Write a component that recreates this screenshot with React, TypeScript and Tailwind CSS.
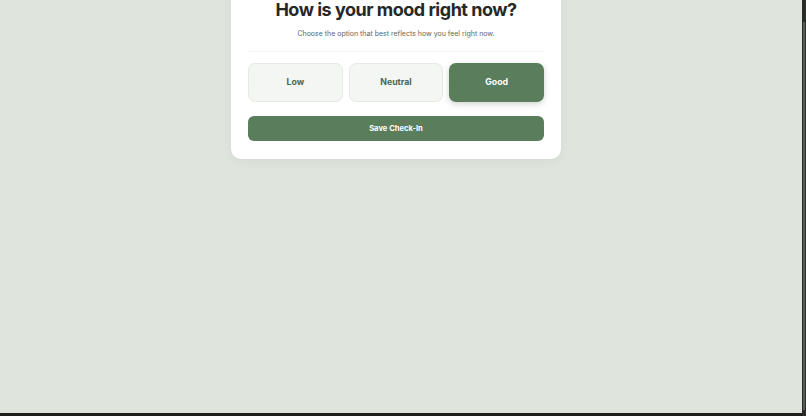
import React, { useState } from "react";

export default function App() {
  const [mood, setMood] = useState("Good");
  const options = ["Low", "Neutral", "Good"];
  return (
    <div className="flex h-[416px] w-[806px] overflow-hidden bg-[#1e1f1e]" style={{ fontFamily: "Inter, 'Noto Sans', sans-serif" }}>
      <div className="flex h-[413px] flex-1 flex-col">
        <div className="flex flex-1 justify-center bg-[#dfe5dd] pr-[10px]">
          <div className="-mt-[20px] flex h-[179px] w-[330px] flex-col rounded-[10px] bg-white px-[17px] shadow-[0_2px_8px_rgba(60,80,60,0.08)]">
            <h1 className="mt-[16px] text-center text-[18px] font-bold leading-[28px] tracking-[-0.5px] text-[#262826]">
              How is your mood right now?
            </h1>
            <p className="mt-[5px] text-center text-[7px] leading-[10px] text-[#626562]">
              Choose the option that best reflects how you feel right now.
            </p>
            <div className="mt-[12px] h-px bg-[#f4f5f3]" />
            <div className="mt-[11px] grid grid-cols-3 gap-[6px]">
              {options.map((o) => (
                <button
                  key={o}
                  onClick={() => setMood(o)}
                  className={
                    o === mood
                      ? "flex h-[39px] items-center justify-center rounded-[7px] bg-[#5a7d5c] text-[8.75px] font-bold text-white shadow-[0_2px_6px_rgba(60,90,60,0.25)]"
                      : "flex h-[39px] items-center justify-center rounded-[7px] border border-[#e6e9e5] bg-[#f4f6f3] text-[8.75px] font-bold text-[#4d654f]"
                  }
                >
                  {o}
                </button>
              ))}
            </div>
            <button className="mt-[14px] flex h-[25px] items-center justify-center rounded-[6px] bg-[#5a7d5c] text-[7.6px] font-bold text-white">
              Save Check-In
            </button>
          </div>
        </div>
      </div>
      <div className="flex h-full w-[4px] flex-col bg-[#2a2b2a]">
        <div className="mx-auto mt-[22px] h-[388px] w-[2px] bg-[#5a5c5a]" />
      </div>
    </div>
  );
}
